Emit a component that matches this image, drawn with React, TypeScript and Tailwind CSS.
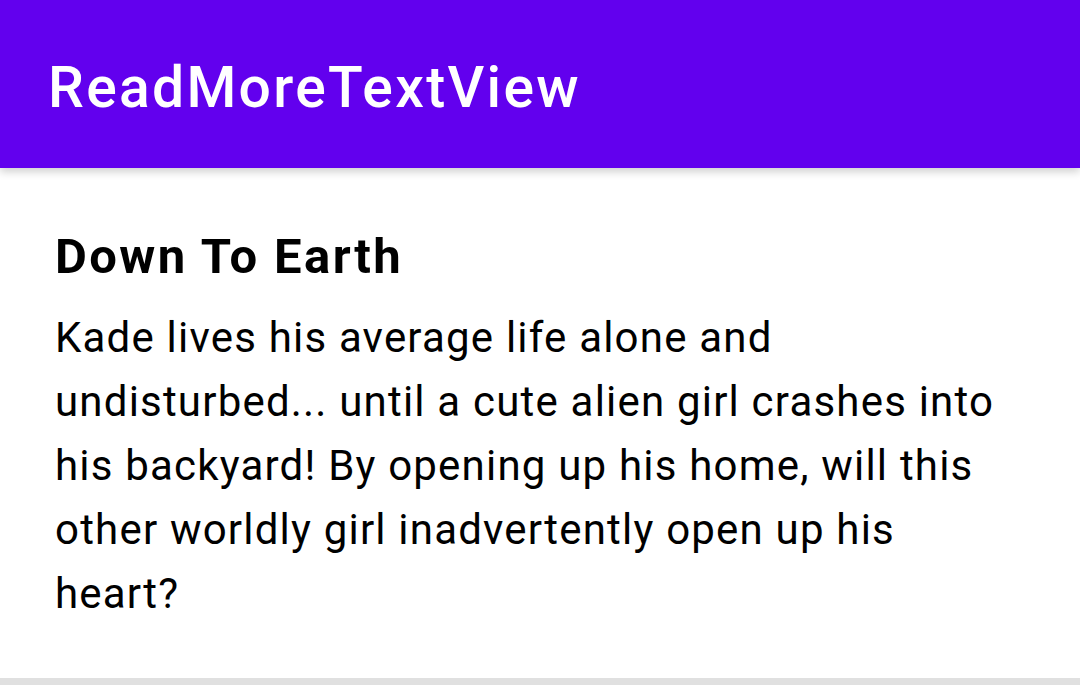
import React from 'react';

const App = () => {
  return (
    <div className="w-[1080px] h-[685px] bg-white flex flex-col overflow-hidden" style={{ fontFamily: 'Roboto, "Liberation Sans", sans-serif' }}>
      <header className="h-[168px] shrink-0 bg-[#6200ee] pl-[48px] pt-[59px] shadow-[0_4px_8px_rgba(0,0,0,0.18)] relative z-10">
        <h1 className="text-white text-[57px] font-medium leading-[57px] tracking-[2.3px]">ReadMoreTextView</h1>
      </header>

      <main className="flex-1 pl-[55px] pr-[50px] pt-[61px]">
        <h2 className="text-[49px] font-bold leading-[56px] tracking-[2.4px] text-black">Down To Earth</h2>
        <p className="text-[42px] leading-[64px] tracking-[1.2px] text-black mt-[21px]">
          Kade lives his average life alone and undisturbed... until a cute alien girl crashes into his backyard! By opening up his home, will this other worldly girl inadvertently open up his heart?
        </p>
      </main>

      <div className="h-[7px] shrink-0 bg-[#e0e0e0]" />
    </div>
  );
};

export default App;
